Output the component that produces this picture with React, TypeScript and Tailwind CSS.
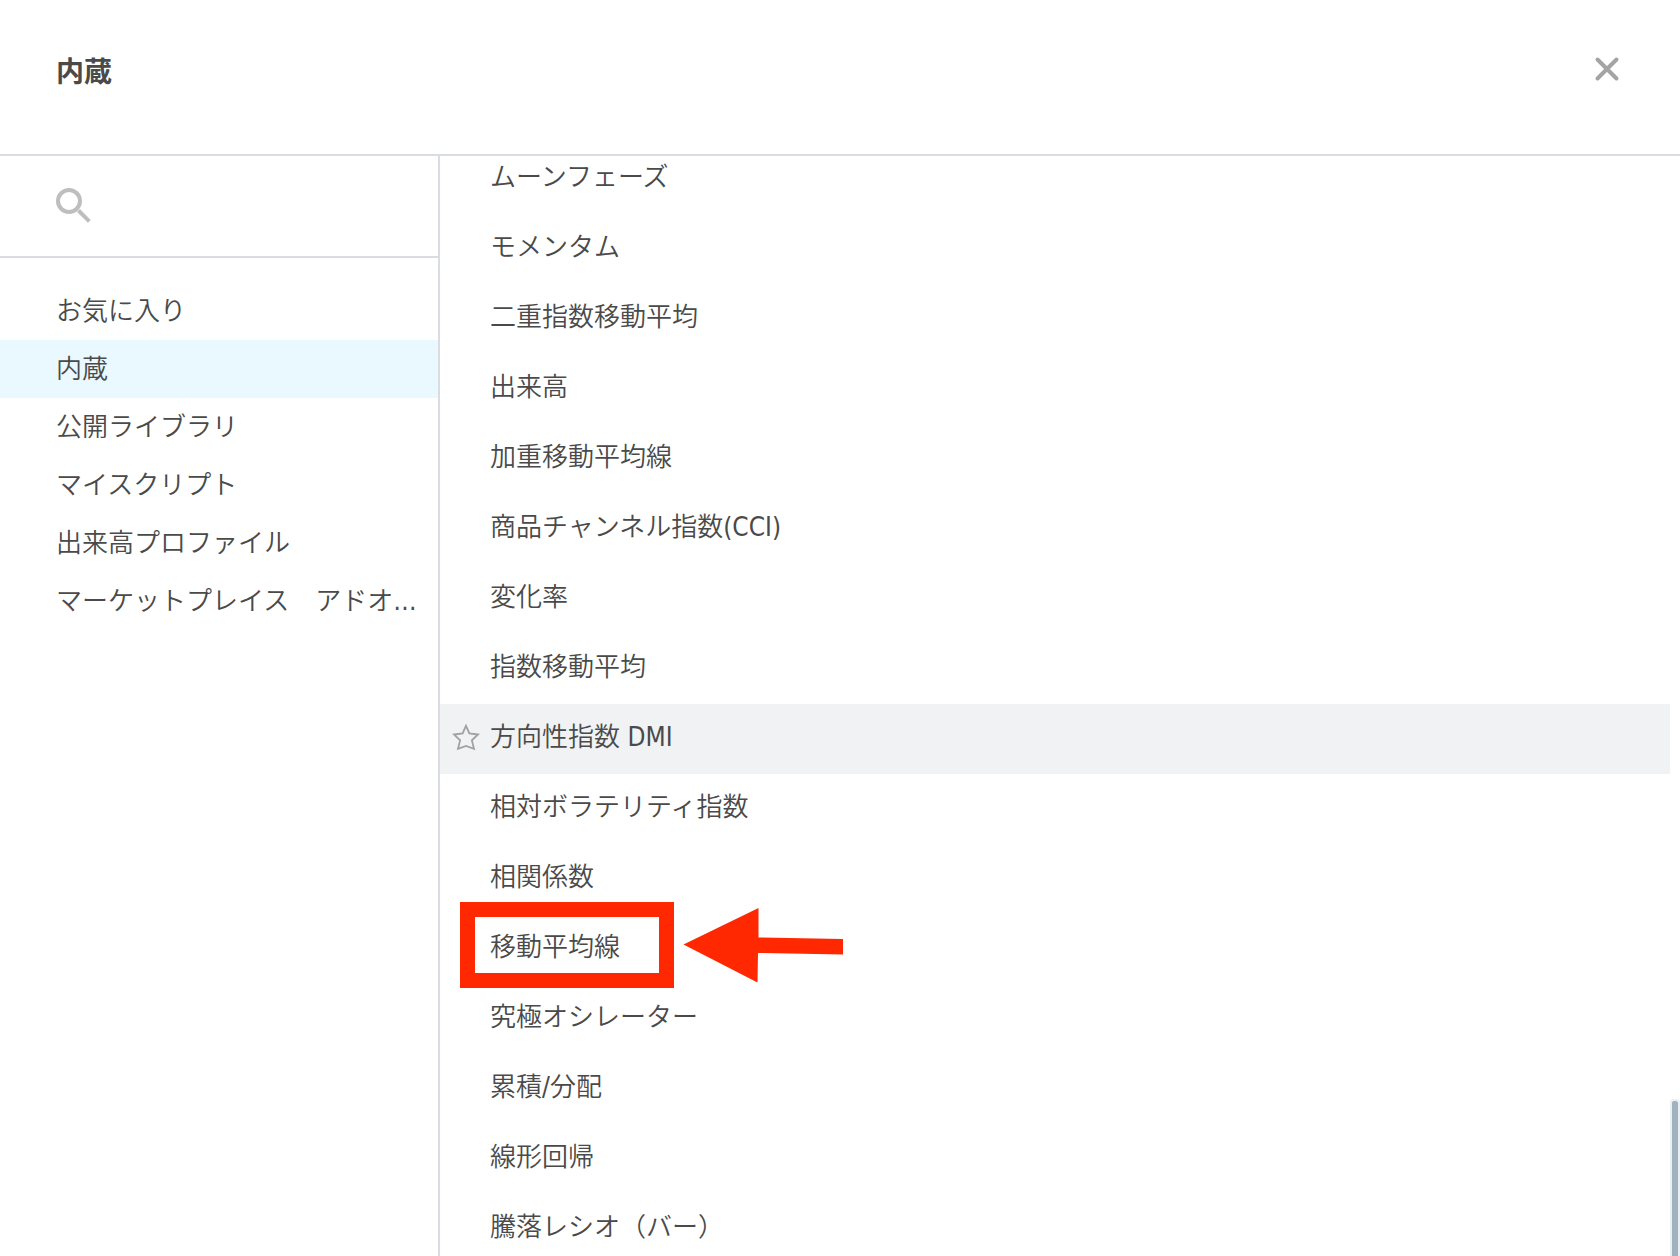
import { useState } from "react";

const CATEGORIES = [
  "お気に入り",
  "内蔵",
  "公開ライブラリ",
  "マイスクリプト",
  "出来高プロファイル",
  "マーケットプレイス　アドオン",
];

const INDICATORS = [
  "ムーンフェーズ",
  "モメンタム",
  "二重指数移動平均",
  "出来高",
  "加重移動平均線",
  "商品チャンネル指数(CCI)",
  "変化率",
  "指数移動平均",
  "方向性指数 DMI",
  "相対ボラテリティ指数",
  "相関係数",
  "移動平均線",
  "究極オシレーター",
  "累積/分配",
  "線形回帰",
  "騰落レシオ（バー）",
];

function SearchIcon() {
  return (
    <svg width="36" height="36" viewBox="0 0 36 36" fill="none" stroke="#bdbebf" strokeWidth="4">
      <circle cx="13" cy="13" r="11" />
      <path d="M22.5 22.5L33.3 33.3" />
    </svg>
  );
}

function CloseIcon() {
  return (
    <svg width="26" height="26" viewBox="-1 -1 26 26" stroke="#a4a4a4" strokeWidth="4" strokeLinecap="round">
      <path d="M2.5 2.5L21.5 21.5M21.5 2.5L2.5 21.5" />
    </svg>
  );
}

function StarIcon() {
  return (
    <svg width="28" height="28" viewBox="0 0 28 28" fill="none" stroke="#a0a1a2" strokeWidth="1.8">
      <path d="M14 2.8L17.4 10.4L26 11.5L19.9 17.4L22 25.9L14 23L6 25.9L8.1 17.4L2 11.5L10.6 10.4Z" />
    </svg>
  );
}

// Red frame and arrow over the row to pick
function Callout() {
  return (
    <div className="pointer-events-none absolute -top-3 left-5 flex items-center gap-2">
      <div className="h-[86px] w-[214px] border-[15px] border-[#ff2800]" />
      <svg width="162" height="76" viewBox="0 0 162 76" fill="#ff2800">
        <path d="M1.5 37.5L76.5 1V30.5L161 32V47.5L76 46L75.5 75.5Z" />
      </svg>
    </div>
  );
}

export default function App() {
  const [category, setCategory] = useState("内蔵");
  const [query, setQuery] = useState("");
  const hovered = "方向性指数 DMI";
  const marked = "移動平均線";

  return (
    <div className="flex h-screen flex-col overflow-hidden bg-white font-['DejaVu_Sans_Condensed','Noto_Sans_CJK_JP',sans-serif] text-[26px] font-[350] text-[#4a4a4a]">
      <header className="flex h-39 shrink-0 items-center justify-between border-b-2 border-[#d9dde1] pr-15 pb-4 pl-14">
        <h1 className="pt-2 text-[28px] font-bold">内蔵</h1>
        <button aria-label="閉じる">
          <CloseIcon />
        </button>
      </header>

      <div className="flex min-h-0 flex-1">
        {/* Categories */}
        <aside className="w-110 shrink-0 border-r-2 border-[#d9dde1]">
          <label className="flex h-[102px] items-center gap-4 border-b-2 border-[#d9dde1] pr-5 pl-14">
            <SearchIcon />
            <input
              type="text"
              aria-label="検索"
              value={query}
              onChange={(e) => setQuery(e.target.value)}
              className="min-w-0 flex-1 outline-none"
            />
          </label>
          <nav className="pt-6">
            {CATEGORIES.map((name) => (
              <button
                key={name}
                onClick={() => setCategory(name)}
                className={`block h-[58px] w-full truncate pr-5 pl-14 text-left ${
                  name === category ? "bg-[#e9f9ff]" : ""
                }`}
              >
                {name}
              </button>
            ))}
          </nav>
        </aside>

        {/* Indicators */}
        <main className="min-w-0 flex-1 overflow-hidden">
          <ul className="-mt-3">
            {INDICATORS.map((name) => (
              <li
                key={name}
                className={`relative flex h-[70px] items-center pl-3 ${
                  name === hovered ? "bg-[#f0f2f4]" : ""
                }`}
              >
                <button
                  aria-label="お気に入りに追加"
                  className={`pb-1 ${name === hovered ? "" : "invisible"}`}
                >
                  <StarIcon />
                </button>
                <button className="h-full flex-1 pb-1 pl-[10px] text-left">{name}</button>
                {name === marked && <Callout />}
              </li>
            ))}
          </ul>
        </main>

        {/* Scrollbar */}
        <div className="flex w-[10px] shrink-0 flex-col justify-end">
          <div className="h-1/7 rounded-t border-x-2 border-t-2 border-[#ebeff3] bg-[#9fb2bd]" />
        </div>
      </div>
    </div>
  );
}
